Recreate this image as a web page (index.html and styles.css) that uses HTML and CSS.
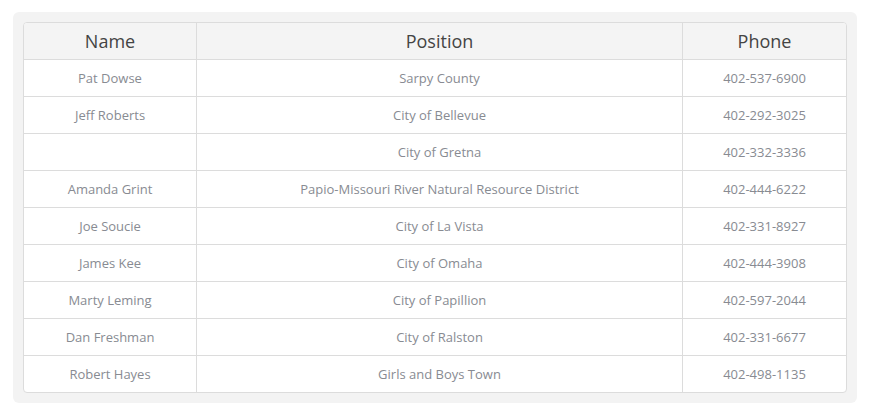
FILE: index.html
```html
<!DOCTYPE html>
<html>
<head>
<meta charset="utf-8">
<link rel="stylesheet" href="styles.css">
</head>
<body>
<div class="card">
  <div class="table-wrap">
    <table class="contacts">
      <colgroup>
        <col class="c-name">
        <col class="c-pos">
        <col class="c-phone">
      </colgroup>
      <thead>
        <tr><th>Name</th><th>Position</th><th>Phone</th></tr>
      </thead>
      <tbody>
        <tr><td>Pat Dowse</td><td>Sarpy County</td><td>402-537-6900</td></tr>
        <tr><td>Jeff Roberts</td><td>City of Bellevue</td><td>402-292-3025</td></tr>
        <tr><td></td><td>City of Gretna</td><td>402-332-3336</td></tr>
        <tr><td>Amanda Grint</td><td>Papio-Missouri River Natural Resource District</td><td>402-444-6222</td></tr>
        <tr><td>Joe Soucie</td><td>City of La Vista</td><td>402-331-8927</td></tr>
        <tr><td>James Kee</td><td>City of Omaha</td><td>402-444-3908</td></tr>
        <tr><td>Marty Leming</td><td>City of Papillion</td><td>402-597-2044</td></tr>
        <tr><td>Dan Freshman</td><td>City of Ralston</td><td>402-331-6677</td></tr>
        <tr><td>Robert Hayes</td><td>Girls and Boys Town</td><td>402-498-1135</td></tr>
      </tbody>
    </table>
  </div>
</div>
</body>
</html>
```
FILE: styles.css
```css
html, body {
  margin: 0;
  padding: 0;
  background: #ffffff;
  font-family: "Open Sans", "Noto Sans", sans-serif;
}
.card {
  margin: 12px 16px 0 13px;
  padding: 10px;
  background: #f3f3f3;
  border-radius: 6px;
}
.table-wrap {
  border: 1px solid #dcdcdc;
  border-radius: 4px;
  overflow: hidden;
  background: #ffffff;
}
.contacts {
  width: 100%;
  border-collapse: separate;
  border-spacing: 0;
  table-layout: fixed;
}
.c-name { width: 173px; }
.c-pos { width: 486px; }
.contacts th,
.contacts td {
  height: 36px;
  padding: 0;
  text-align: center;
  vertical-align: middle;
  border-right: 1px solid #dcdcdc;
}
.contacts th:last-child,
.contacts td:last-child {
  border-right: none;
}
.contacts td {
  border-top: 1px solid #dcdcdc;
  font-size: 13px;
  color: #888b92;
}
.contacts th {
  background: #f4f4f4;
  font-size: 18px;
  font-weight: 400;
  color: #444444;
}
```
